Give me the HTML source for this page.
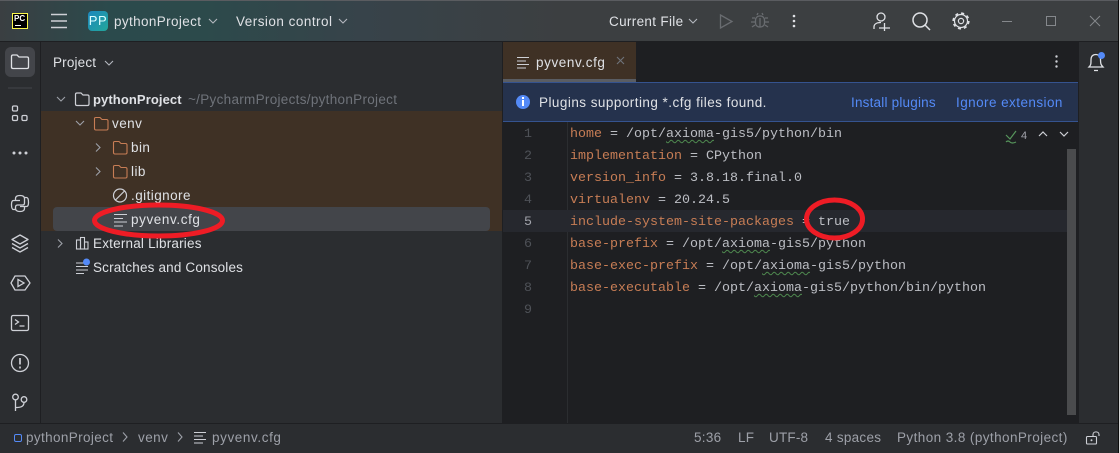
<!DOCTYPE html>
<html><head><meta charset="utf-8"><style>
html,body{margin:0;padding:0;width:1120px;height:453px;overflow:hidden;background:#2b2d30}
*{box-sizing:border-box}
div,span{position:absolute}
.t{font:13.5px/18px "Liberation Sans",sans-serif;white-space:pre;color:#dfe1e5;letter-spacing:.45px;margin-top:1px}
.c{font:13.33px/22px "Liberation Mono",monospace;white-space:pre;color:#bcbec4;left:570px;margin-top:2px}
.c i{font-style:normal;color:#c77d55}
.c u{text-decoration:underline wavy #4f8a4f 1px;text-underline-offset:2px}
.n{font:13.33px/22px "Liberation Mono",monospace;color:#4e5157;left:524px;margin-top:2px}
svg{position:absolute;overflow:visible;fill:none}
</style></head><body>
<!-- header -->
<div style="left:0;top:0;width:1120px;height:41px;background:linear-gradient(90deg,#3a3f42 0,#2b4a4c 110px,#2c4a4b 200px,#37434a 360px,#3c3f41 560px,#3c3f41 100%)"></div>
<div style="left:0;top:0;width:1120px;height:1px;background:#5a5c60"></div>
<div style="left:0;top:41px;width:1120px;height:1px;background:#1e1f22"></div>
<!-- logo -->
<div style="left:12px;top:13px;width:16px;height:16px;background:#000;border:1px solid #fcf84a"></div>
<div style="left:14px;top:14px;font:bold 8px/10px 'Liberation Sans',sans-serif;color:#fff">PC</div>
<div style="left:15px;top:25px;width:6px;height:1px;background:#fff"></div>
<svg style="left:0;top:0" width="300" height="41" stroke="#ced0d6" stroke-width="1.4"><path d="M51 14.500H67M51 21H67M51 27.500H67"/></svg>
<div style="left:88px;top:11px;width:20px;height:20px;border-radius:4px;background:linear-gradient(135deg,#1d87bd,#23a79b);font:13px/20px 'Liberation Sans',sans-serif;color:#dff;text-align:center;letter-spacing:.6px">PP</div>
<div class="t" style="left:114px;top:12px;letter-spacing:.37px">pythonProject</div>
<svg style="left:208px;top:18px" width="10" height="6" stroke="#b4b8bf" stroke-width="1.1"><path d="M1 1L5 5L9 1"/></svg>
<div class="t" style="left:236px;top:12px;letter-spacing:.48px">Version control</div>
<svg style="left:338px;top:18px" width="10" height="6" stroke="#b4b8bf" stroke-width="1.1"><path d="M1 1L5 5L9 1"/></svg>
<div class="t" style="left:609px;top:12px;letter-spacing:.33px">Current File</div>
<svg style="left:688px;top:18px" width="10" height="6" stroke="#b4b8bf" stroke-width="1.1"><path d="M1 1L5 5L9 1"/></svg>
<svg style="left:0;top:0" width="1120" height="41" stroke-width="1.3">
<path d="M720.500 15V28L732 21.500Z" stroke="#696c70"/>
<g stroke="#696c70"><rect x="755.500" y="16" width="9" height="11" rx="4"/><path d="M757 15L758 13M763 15L762 13M752 18H755M765 18H768M751 22H755M765 22H769M752 27L755 25M768 27L765 25M760 18V27"/></g>
<g fill="#dfe1e5"><circle cx="794" cy="16" r="1.300"/><circle cx="794" cy="21" r="1.300"/><circle cx="794" cy="26" r="1.300"/></g>
<g stroke="#dfe1e5"><circle cx="881" cy="17" r="4"/><path d="M874 29V27C874 24 877 22.500 881 22.500M879 28H890M884.500 23V31" /></g>
<g stroke="#dfe1e5" stroke-width="1.500"><circle cx="920" cy="20" r="7"/><path d="M925 25L930 30"/></g>
<g stroke="#dfe1e5"><circle cx="961" cy="21" r="6.500" stroke-width="1.200"/><circle cx="961" cy="21" r="7.800" stroke-width="1.600" stroke-dasharray="3.100 3"/><circle cx="961" cy="21" r="2.600" stroke-width="1.200"/></g>
<g stroke="#85888c" stroke-width="1"><path d="M1002 21.500H1012"/><rect x="1046.500" y="16.500" width="9" height="9"/><path d="M1090 16L1100 26M1100 16L1090 26"/></g>
</svg>
<!-- left toolbar -->
<div style="left:40px;top:42px;width:1px;height:381px;background:#1e1f22"></div>
<div style="left:5px;top:47px;width:30px;height:30px;border-radius:6px;background:#43454a"></div>
<svg style="left:0;top:0" width="40" height="423" stroke="#ced0d6" stroke-width="1.300">
<path d="M11.500 56.500C11.500 55.500 12 55 13 55H17L19 57H27C28 57 28.500 57.500 28.500 58.500V67C28.500 68 28 68.500 27 68.500H13C12 68.500 11.500 68 11.500 67Z" stroke="#dfe1e5"/>
<rect x="12.500" y="106" width="5" height="5" rx="1.200"/><rect x="12.500" y="115.500" width="5" height="5" rx="1.200"/><rect x="22" y="115.500" width="5" height="5" rx="1.200"/>
<path d="M8 88H32" stroke="#43454a" stroke-width="1"/>
<g fill="#ced0d6" stroke="none"><circle cx="14" cy="153" r="1.500"/><circle cx="20" cy="153" r="1.500"/><circle cx="26" cy="153" r="1.500"/></g>
<path d="M20 200.500H15.500V198.500C15.500 196.500 17 195.500 20 195.500C23 195.500 24.500 196.500 24.500 198.500V203C24.500 204.500 23.500 205 22.500 205H17.500C16 205 15.500 206 15.500 207.500V209.500H13.500C12 209.500 11.500 207.500 11.500 204.500C11.500 202 12 200.500 13.500 200.500H15.500"/>
<path d="M20 206.500H24.500V208.500C24.500 210.500 23 211.500 20 211.500C17 211.500 15.500 210.500 15.500 208.500M24.500 197.500H26.500C28 197.500 28.500 199.500 28.500 202.500C28.500 205 28 206.500 26.500 206.500H24.500"/>
<path d="M20 235L28 239.500L20 244L12 239.500ZM12 243.500L20 248L28 243.500M12 247.500L20 252L28 247.500" stroke-linejoin="round"/>
<path d="M15 276H25L30 283L25 290H15L11 283Z" stroke-linejoin="round"/><path d="M18 279.500V286.500L24 283Z"/>
<rect x="11.500" y="315.500" width="17" height="15" rx="1.500"/><path d="M15 319.500L18.500 322L15 324.500M19.500 326H24.500"/>
<circle cx="20" cy="363" r="8.500"/><path d="M20 358V364.500" stroke-width="1.700"/><path d="M20 366.500V368.500" stroke-width="1.700"/>
<circle cx="15.500" cy="397" r="2.800"/><circle cx="24" cy="399.500" r="2.800"/><path d="M15.500 400V411M15.500 407.500C20 407.500 24 407 24 402.500"/>
</svg>
<!-- project panel -->
<div class="t" style="left:53px;top:53px;letter-spacing:.17px">Project</div>
<svg style="left:104px;top:60px" width="10" height="6" stroke="#b4b8bf" stroke-width="1.100"><path d="M1 1L5 5L9 1"/></svg>
<div style="left:41px;top:111px;width:461px;height:120px;background:#3f3125"></div>
<div style="left:53px;top:207px;width:437px;height:24px;background:#43454a;border-radius:4px"></div>
<div style="left:41px;top:207px;width:12px;height:24px;background:#3f3125"></div>
<svg style="left:0;top:0" width="300" height="280" stroke="#9da0a8" stroke-width="1.100">
<path d="M57 97L61 101L65 97M76 121L80 125L84 121M96 143.500L100 147.500L96 151.500M96 167.500L100 171.500L96 175.500M58 239.500L62 243.500L58 247.500"/>
<path d="M75.500 94.500C75.500 93.500 76 93 77 93H81L83 95H87.500C88.500 95 89 95.500 89 96.500V104C89 105 88.500 105.500 87.500 105.500H77C76 105.500 75.500 105 75.500 104Z" stroke="#ced0d6" stroke-width="1.200"/>
<g stroke="#c77d55" stroke-width="1.100"><path d="M94.500 118.500C94.500 118 95 117.500 96 117.500H100L102 119.500H106.500C107.500 119.500 108 120 108 121V128.500C108 129.500 107.500 130 106.500 130H96C95 130 94.500 129.500 94.500 128.500Z"/>
<path d="M113.500 142.500C113.500 142 114 141.500 115 141.500H119L121 143.500H125.500C126.500 143.500 127 144 127 145V152.500C127 153.500 126.500 154 125.500 154H115C114 154 113.500 153.500 113.500 152.500Z"/>
<path d="M113.500 166.500C113.500 166 114 165.500 115 165.500H119L121 167.500H125.500C126.500 167.500 127 168 127 169V176.500C127 177.500 126.500 178 125.500 178H115C114 178 113.500 177.500 113.500 176.500Z"/></g>
<g stroke="#ced0d6" stroke-width="1.200"><circle cx="120" cy="195.500" r="6.500"/><path d="M115.500 200L124.500 191"/></g>
<path d="M114 214.500H127M114 218.500H123M114 222H127M114 226H123" stroke="#ced0d6"/>
<g stroke="#ced0d6"><rect x="76.500" y="240" width="4" height="9"/><rect x="80.500" y="237.500" width="4" height="11.500"/><rect x="84.500" y="242" width="3.500" height="7"/></g>
<path d="M76 263H84M76 266.500H88M76 270H88M76 273.500H84" stroke="#ced0d6"/>
<circle cx="86.500" cy="262" r="3.500" fill="#548af7" stroke="none"/>
</svg>
<div class="t" style="left:93px;top:90px;font-size:13px;font-weight:bold;letter-spacing:.1px">pythonProject</div>
<div class="t" style="left:188px;top:90px;color:#6f737a;letter-spacing:.3px">~/PycharmProjects/pythonProject</div>
<div class="t" style="left:112px;top:114px">venv</div>
<div class="t" style="left:131px;top:138px">bin</div>
<div class="t" style="left:131px;top:162px">lib</div>
<div class="t" style="left:131px;top:186px;letter-spacing:.44px">.gitignore</div>
<div class="t" style="left:131px;top:210px;letter-spacing:.6px">pyvenv.cfg</div>
<div class="t" style="left:93px;top:234px;letter-spacing:.2px">External Libraries</div>
<div class="t" style="left:93px;top:258px;letter-spacing:.17px">Scratches and Consoles</div>
<!-- editor -->
<div style="left:502px;top:42px;width:1px;height:381px;background:#1e1f22"></div>
<div style="left:503px;top:42px;width:575px;height:381px;background:#1e1f22"></div>
<div style="left:503px;top:42px;width:133px;height:41px;background:#3f3125"></div>
<div style="left:503px;top:79px;width:133px;height:3px;background:#5a5d63"></div>
<svg style="left:0;top:42px" width="640" height="40" stroke="#ced0d6" stroke-width="1.100"><path d="M517 15.500H529M517 19H526M517 22.500H529M517 26H526"/><path d="M617 15L624 22M624 15L617 22" stroke="#6f737a"/></svg>
<div class="t" style="left:536px;top:53px;letter-spacing:.6px">pyvenv.cfg</div>
<svg style="left:1050px;top:54px" width="14" height="16" fill="#ced0d6"><circle cx="6.500" cy="2.500" r="1.200" fill="#ced0d6"/><circle cx="6.500" cy="7.500" r="1.200" fill="#ced0d6"/><circle cx="6.500" cy="12.500" r="1.200" fill="#ced0d6"/></svg>
<div style="left:503px;top:82px;width:575px;height:40px;background:#25324d;border-top:1px solid #35538f;border-bottom:1px solid #35538f"></div>
<div style="left:516px;top:95px;width:14px;height:14px;border-radius:50%;background:#548af7"></div>
<div style="left:522px;top:97px;width:2px;height:2px;background:#fff"></div>
<div style="left:522px;top:100px;width:2px;height:6px;background:#fff"></div>
<div class="t" style="left:539px;top:93px;letter-spacing:.46px">Plugins supporting *.cfg files found.</div>
<div class="t" style="left:851px;top:93px;color:#548af7;letter-spacing:.2px">Install plugins</div>
<div class="t" style="left:956px;top:93px;color:#548af7;letter-spacing:.44px">Ignore extension</div>
<!-- gutter -->
<div style="left:567px;top:122px;width:1px;height:301px;background:#2b2d30"></div>
<div style="left:503px;top:210px;width:564px;height:22px;background:#26282e"></div>
<div class="n" style="top:122px">1</div><div class="n" style="top:144px">2</div><div class="n" style="top:166px">3</div><div class="n" style="top:188px">4</div><div class="n" style="top:210px;color:#a1a3ab">5</div><div class="n" style="top:232px">6</div><div class="n" style="top:254px">7</div><div class="n" style="top:276px">8</div><div class="n" style="top:298px">9</div>
<div class="c" style="top:122px"><i>home</i> = /opt/<u>axioma</u>-gis5/python/bin</div>
<div class="c" style="top:144px"><i>implementation</i> = CPython</div>
<div class="c" style="top:166px"><i>version_info</i> = 3.8.18.final.0</div>
<div class="c" style="top:188px"><i>virtualenv</i> = 20.24.5</div>
<div class="c" style="top:210px"><i>include-system-site-packages</i> = true</div>
<div class="c" style="top:232px"><i>base-prefix</i> = /opt/<u>axioma</u>-gis5/python</div>
<div class="c" style="top:254px"><i>base-exec-prefix</i> = /opt/<u>axioma</u>-gis5/python</div>
<div class="c" style="top:276px"><i>base-executable</i> = /opt/<u>axioma</u>-gis5/python/bin/python</div>
<svg style="left:0;top:0" width="1120" height="150" stroke-width="1.200"><path d="M1006 135L1010 139L1016 131M1006 142Q1008 140 1010 142T1016 142" stroke="#57965c"/><path d="M1039 136L1043 132L1047 136M1060 132L1064 136L1068 132" stroke="#ced0d6"/></svg>
<div class="t" style="left:1021px;top:126px;font-size:11px;color:#a1a3ab;letter-spacing:0">4</div>
<div style="left:1067px;top:149px;width:9px;height:266px;background:#4a4b4d"></div>
<!-- right bar -->
<div style="left:1078px;top:42px;width:1px;height:381px;background:#1e1f22"></div>
<svg style="left:1085px;top:50px" width="24" height="26" stroke="#dfe1e5" stroke-width="1.300"><path d="M4 17C6 15 6 14 6 10C6 6 8 4.500 11 4.500C13 4.500 15 6 15.500 9C15.500 14 16 15 18 17ZM9 20.500H13"/><circle cx="16.500" cy="5.500" r="3.500" fill="#548af7" stroke="none"/></svg>
<!-- status bar -->
<div style="left:0;top:423px;width:1120px;height:1px;background:#1e1f22"></div>
<div style="left:14px;top:434px;width:8px;height:8px;border:1.300px solid #548af7;border-radius:2px"></div>
<svg style="left:0;top:423px" width="220" height="30" stroke="#9da0a8" stroke-width="1.100"><path d="M123 9.500L127 14L123 18.500M178 9.500L182 14L178 18.500"/><path d="M194 9.500H206M194 13H203M194 16.500H206M194 20H203" stroke="#ced0d6"/></svg>
<div class="t" style="left:26px;top:428px;color:#9da0a8;letter-spacing:.37px">pythonProject</div>
<div class="t" style="left:138px;top:428px;color:#9da0a8;letter-spacing:.45px">venv</div>
<div class="t" style="left:212px;top:428px;color:#9da0a8;letter-spacing:.6px">pyvenv.cfg</div>
<div class="t" style="left:694px;top:428px;color:#9da0a8;letter-spacing:.3px">5:36</div>
<div class="t" style="left:738px;top:428px;color:#9da0a8;letter-spacing:.3px">LF</div>
<div class="t" style="left:769px;top:428px;color:#9da0a8;letter-spacing:.2px">UTF-8</div>
<div class="t" style="left:825px;top:428px;color:#9da0a8;letter-spacing:.28px">4 spaces</div>
<div class="t" style="left:897px;top:428px;color:#9da0a8;letter-spacing:.42px">Python 3.8 (pythonProject)</div>
<svg style="left:1086px;top:431px" width="18" height="16" stroke="#ced0d6" stroke-width="1.100"><rect x="0.500" y="5.500" width="10" height="7.500" rx="1"/><path d="M7 5V3.500C7 0 13 0 13 3.500V5"/><circle cx="5.500" cy="9.300" r="1" fill="#ced0d6" stroke="none"/></svg>
<!-- red annotations -->
<svg style="left:0;top:0" width="1120" height="453"><ellipse cx="158.500" cy="220.500" rx="64" ry="15.500" stroke="#ee1c25" stroke-width="5"/><ellipse cx="834.500" cy="219" rx="28" ry="19" stroke="#ee1c25" stroke-width="5"/></svg>
<!-- right edge -->
<div style="left:1118px;top:0;width:1px;height:453px;background:#0c0c0c"></div>
<div style="left:1119px;top:0;width:1px;height:453px;background:#d8d8d8"></div>
</body></html>
